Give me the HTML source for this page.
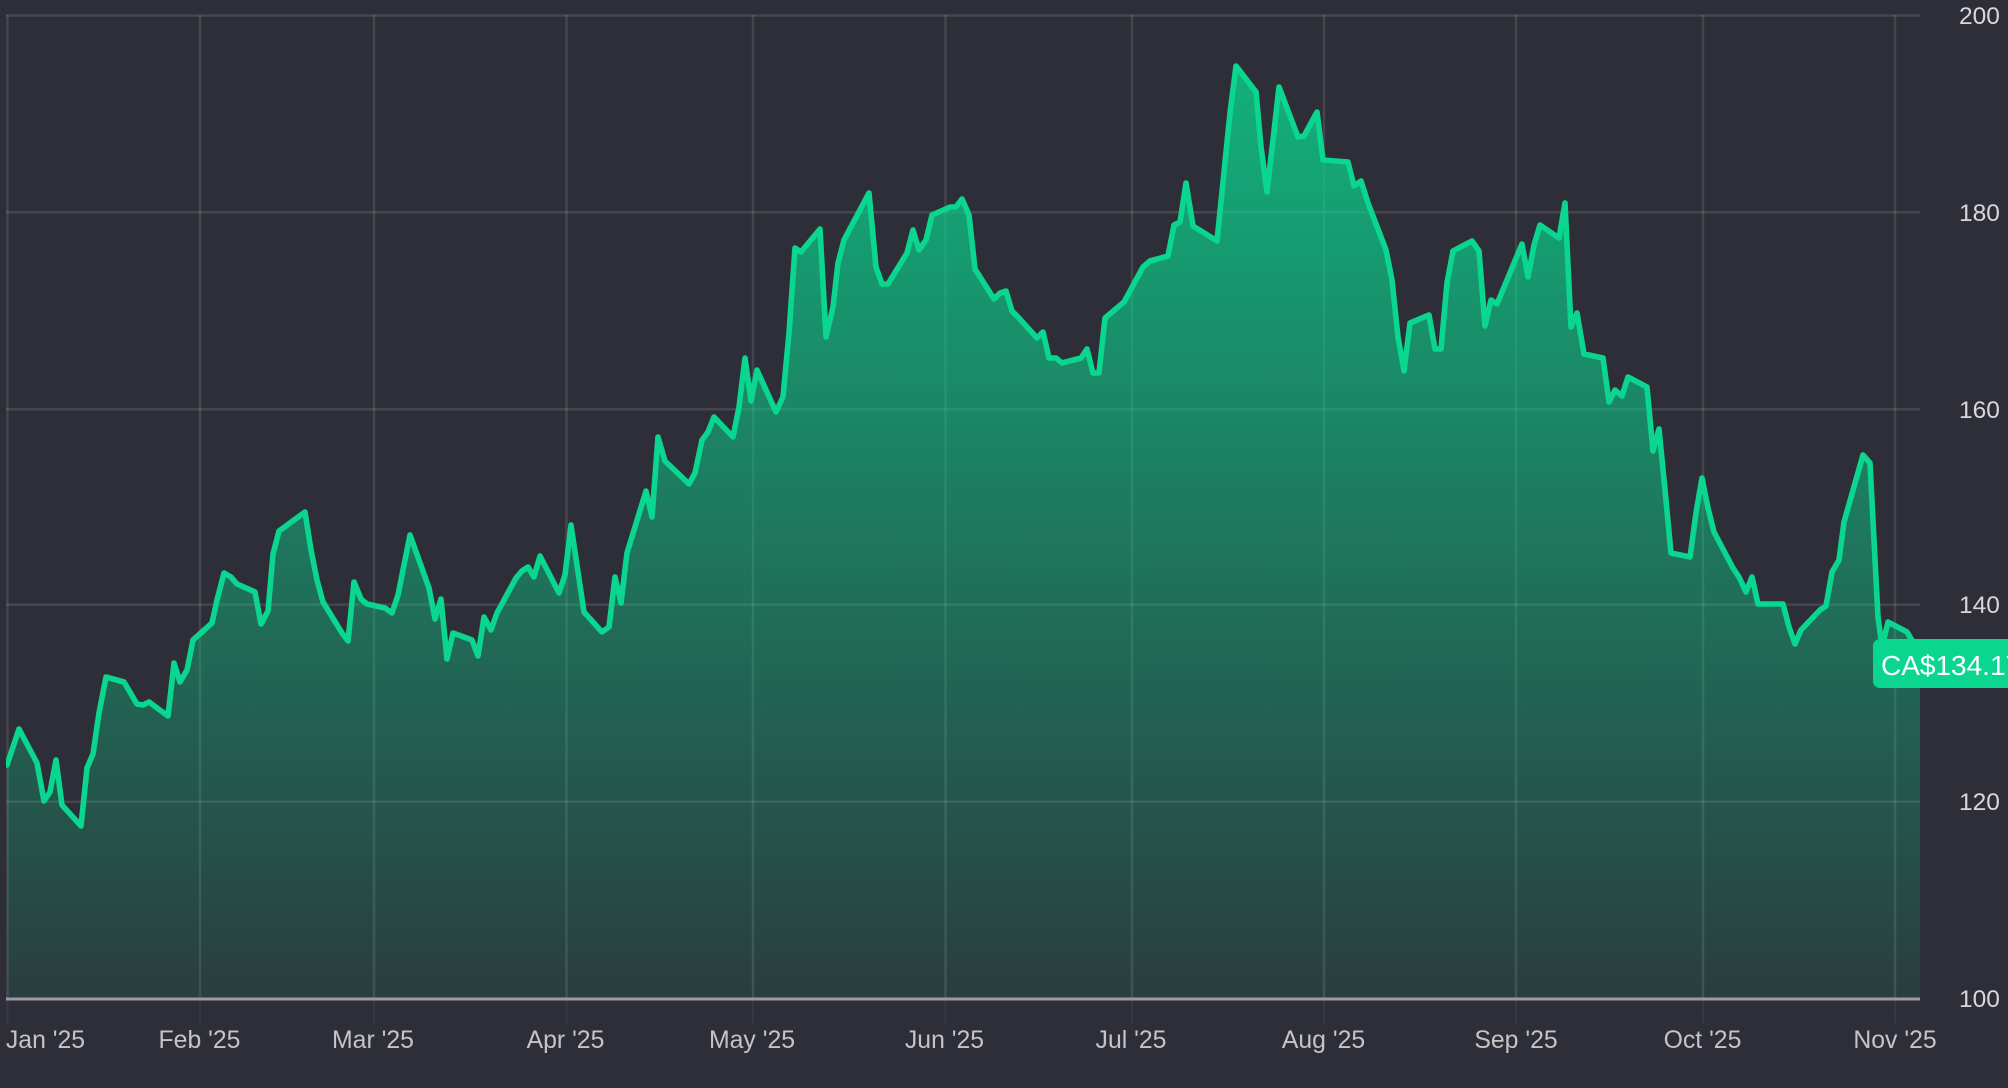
<!DOCTYPE html>
<html><head><meta charset="utf-8"><title>Chart</title>
<style>
html,body{margin:0;padding:0;background:#2d2e37;width:2008px;height:1088px;overflow:hidden}
svg{display:block;position:absolute;left:0;top:0}
text{font-family:"Liberation Sans",sans-serif}
</style></head><body>
<svg width="2008" height="1088" viewBox="0 0 2008 1088" xmlns="http://www.w3.org/2000/svg">
<defs>
<linearGradient id="g" gradientUnits="userSpaceOnUse" x1="0" y1="66" x2="0" y2="999">
<stop offset="0" stop-color="#0ad68f" stop-opacity="0.78"/>
<stop offset="1" stop-color="#0ad68f" stop-opacity="0.09"/>
</linearGradient>
<clipPath id="c"><rect x="6" y="0" width="1914" height="1000"/></clipPath>
</defs>
<rect width="2008" height="1088" fill="#2d2e37"/>
<g stroke="#ffffff" stroke-opacity="0.115" stroke-width="2.5" fill="none">
<path d="M6 15.5H1920M6 212.3H1920M6 409.2H1920M6 604.6H1920M6 801.8H1920"/>
<path d="M7.5 15V999M200 15V999M374 15V999M566.5 15V999M753 15V999M945.5 15V999M1132 15V999M1324 15V999M1516 15V999M1703 15V999M1895 15V999"/>
</g>
<g stroke="#ffffff" stroke-opacity="0.05" stroke-width="2" fill="none">
<path d="M7.5 999V1023M200 999V1023M374 999V1023M566.5 999V1023M753 999V1023M945.5 999V1023M1132 999V1023M1324 999V1023M1516 999V1023M1703 999V1023M1895 999V1023"/>
</g>
<polygon clip-path="url(#c)" fill="url(#g)" points="7,999 7,765 19,729 37,763 44,801 50,792 56,760 62,805 81,826 87,768 93,754 99,713 106,677 124,682 137,704 143,705 149,702 168,716 174,663 180,682 187,670 193,640 212,623 217,600 224,573 231,577 237,584 255,592 261,624 268,611 273,554 279,531 305,512 311,550 317,580 323,602 342,633 348,641 354,582 361,599 367,604 385,608 392,613 398,595 403,570 410,535 429,588 435,619 441,599 447,659 453,633 472,640 478,656 484,617 491,630 497,613 516,578 522,571 528,567 534,577 540,556 559,593 565,575 571,525 584,612 602,632 609,627 615,577 621,603 627,553 646,491 652,517 658,437 665,461 689,484 695,473 702,440 708,432 714,417 733,437 739,407 745,358 751,401 757,370 776,412 783,397 789,333 795,248 801,252 820,229 826,337 833,307 838,263 844,240 869,193 876,267 882,284 888,284 907,253 913,230 919,250 926,240 932,215 950,207 956,207 962,199 969,215 975,269 994,299 1000,293 1006,291 1012,311 1018,317 1037,338 1043,332 1049,358 1056,358 1062,363 1081,358 1087,349 1093,373 1099,373 1105,318 1124,302 1130,291 1143,267 1150,261 1168,256 1174,225 1180,222 1186,183 1193,226 1217,241 1223,182 1230,113 1236,66 1256,92 1261,147 1267,192 1273,140 1279,87 1298,137 1304,136 1317,112 1323,160 1348,162 1354,186 1361,181 1368,203 1386,250 1392,280 1398,337 1404,371 1410,323 1429,315 1435,349 1441,349 1447,283 1453,251 1472,241 1479,251 1485,326 1491,300 1497,304 1522,244 1528,277 1534,245 1540,225 1559,238 1565,203 1571,327 1577,313 1584,354 1603,358 1609,402 1615,390 1622,396 1628,377 1647,387 1653,451 1659,429 1665,490 1671,553 1690,557 1696,513 1702,478 1708,508 1714,532 1733,568 1739,577 1746,592 1752,577 1758,604 1783,604 1789,627 1795,644 1801,630 1820,610 1826,606 1832,572 1839,560 1844,522 1863,455 1870,463 1878,617 1882,647 1888,622 1907,632 1913,642 1920,664 1920,999"/>
<polyline clip-path="url(#c)" fill="none" stroke="#0ad68f" stroke-width="5.6" stroke-linejoin="round" stroke-linecap="round" points="7,765 19,729 37,763 44,801 50,792 56,760 62,805 81,826 87,768 93,754 99,713 106,677 124,682 137,704 143,705 149,702 168,716 174,663 180,682 187,670 193,640 212,623 217,600 224,573 231,577 237,584 255,592 261,624 268,611 273,554 279,531 305,512 311,550 317,580 323,602 342,633 348,641 354,582 361,599 367,604 385,608 392,613 398,595 403,570 410,535 429,588 435,619 441,599 447,659 453,633 472,640 478,656 484,617 491,630 497,613 516,578 522,571 528,567 534,577 540,556 559,593 565,575 571,525 584,612 602,632 609,627 615,577 621,603 627,553 646,491 652,517 658,437 665,461 689,484 695,473 702,440 708,432 714,417 733,437 739,407 745,358 751,401 757,370 776,412 783,397 789,333 795,248 801,252 820,229 826,337 833,307 838,263 844,240 869,193 876,267 882,284 888,284 907,253 913,230 919,250 926,240 932,215 950,207 956,207 962,199 969,215 975,269 994,299 1000,293 1006,291 1012,311 1018,317 1037,338 1043,332 1049,358 1056,358 1062,363 1081,358 1087,349 1093,373 1099,373 1105,318 1124,302 1130,291 1143,267 1150,261 1168,256 1174,225 1180,222 1186,183 1193,226 1217,241 1223,182 1230,113 1236,66 1256,92 1261,147 1267,192 1273,140 1279,87 1298,137 1304,136 1317,112 1323,160 1348,162 1354,186 1361,181 1368,203 1386,250 1392,280 1398,337 1404,371 1410,323 1429,315 1435,349 1441,349 1447,283 1453,251 1472,241 1479,251 1485,326 1491,300 1497,304 1522,244 1528,277 1534,245 1540,225 1559,238 1565,203 1571,327 1577,313 1584,354 1603,358 1609,402 1615,390 1622,396 1628,377 1647,387 1653,451 1659,429 1665,490 1671,553 1690,557 1696,513 1702,478 1708,508 1714,532 1733,568 1739,577 1746,592 1752,577 1758,604 1783,604 1789,627 1795,644 1801,630 1820,610 1826,606 1832,572 1839,560 1844,522 1863,455 1870,463 1878,617 1882,647 1888,622 1907,632 1913,642 1920,664"/>
<rect x="6" y="997.5" width="1914" height="3" fill="#9b9ba6"/>
<g font-size="24.8" fill="#c4c4c6" text-anchor="middle">
<text x="45.5" y="1048">Jan '25</text>
<text x="199.5" y="1048">Feb '25</text>
<text x="373" y="1048">Mar '25</text>
<text x="565.5" y="1048">Apr '25</text>
<text x="752" y="1048">May '25</text>
<text x="944.5" y="1048">Jun '25</text>
<text x="1131" y="1048">Jul '25</text>
<text x="1323.5" y="1048">Aug '25</text>
<text x="1516" y="1048">Sep '25</text>
<text x="1702.5" y="1048">Oct '25</text>
<text x="1895" y="1048">Nov '25</text>
</g>
<g font-size="24.5" fill="#d8d8da">
<text x="1959" y="24">200</text>
<text x="1959" y="221">180</text>
<text x="1959" y="418">160</text>
<text x="1959" y="613">140</text>
<text x="1959" y="810">120</text>
<text x="1959" y="1007">100</text>
</g>
<path d="M2010 639H1880a7 7 0 0 0 -7 7V681a7 7 0 0 0 7 7H2010Z" fill="#0ad68f"/>
<text x="1881" y="675" font-size="28" fill="#ffffff">CA$134.17</text>
</svg>
</body></html>
